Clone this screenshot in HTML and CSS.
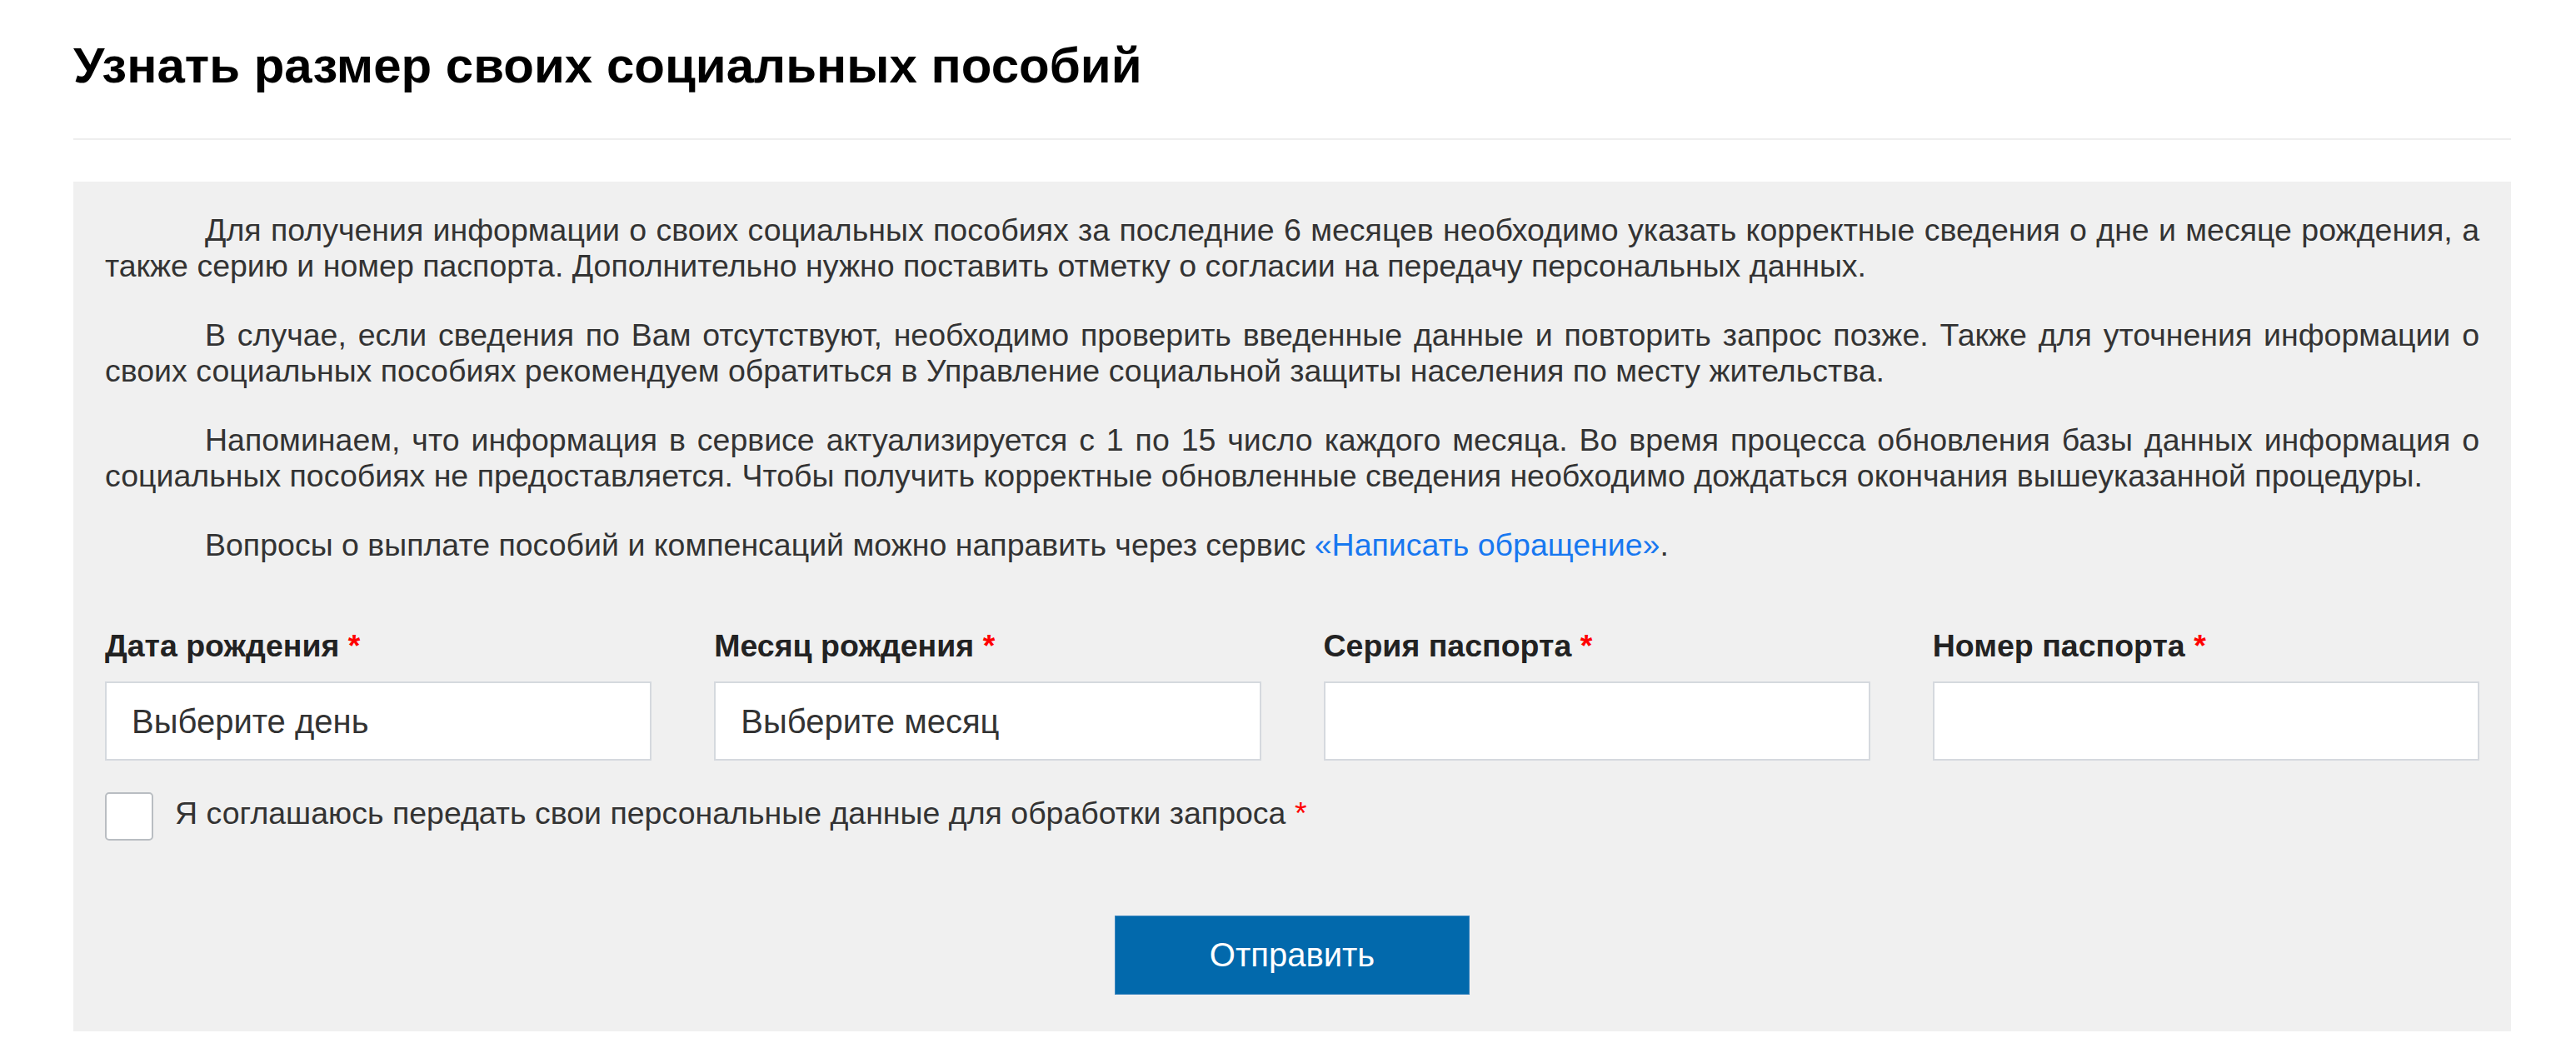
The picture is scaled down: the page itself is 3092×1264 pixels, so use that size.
FILE: index.html
```html
<!DOCTYPE html>
<html lang="ru">
<head>
    <meta charset="UTF-8">
    <meta name="viewport" content="width=device-width, initial-scale=1.0">
    <title>Узнать размер своих социальных пособий</title>
    <link rel="stylesheet" href="styles.css">
</head>
<body>

<div class="page">

    <h1 class="page-title">Узнать размер своих социальных пособий</h1>

    <div class="benefits-box">

        <!-- Info text -->
        <div class="intro">
            <p>Для получения информации о своих социальных пособиях за последние 6 месяцев необходимо указать корректные сведения о дне и месяце рождения, а также серию и номер паспорта. Дополнительно нужно поставить отметку о согласии на передачу персональных данных.</p>
            <p>В случае, если сведения по Вам отсутствуют, необходимо проверить введенные данные и повторить запрос позже. Также для уточнения информации о своих социальных пособиях рекомендуем обратиться в Управление социальной защиты населения по месту жительства.</p>
            <p>Напоминаем, что информация в сервисе актуализируется с 1 по 15 число каждого месяца. Во время процесса обновления базы данных информация о социальных пособиях не предоставляется. Чтобы получить корректные обновленные сведения необходимо дождаться окончания вышеуказанной процедуры.</p>
            <p>Вопросы о выплате пособий и компенсаций можно направить через сервис <a href="#">«Написать обращение»</a>.</p>
        </div>

        <!-- Request form -->
        <form class="benefits-form" id="benefitsForm">
            <div class="fields">
                <div class="field">
                    <label for="birthDay">Дата рождения <span class="req">*</span></label>
                    <select id="birthDay" class="control">
                        <option>Выберите день</option>
                    </select>
                </div>
                <div class="field">
                    <label for="birthMonth">Месяц рождения <span class="req">*</span></label>
                    <select id="birthMonth" class="control">
                        <option>Выберите месяц</option>
                    </select>
                </div>
                <div class="field">
                    <label for="passSeries">Серия паспорта <span class="req">*</span></label>
                    <input id="passSeries" class="control" type="text">
                </div>
                <div class="field">
                    <label for="passNumber">Номер паспорта <span class="req">*</span></label>
                    <input id="passNumber" class="control" type="text">
                </div>
            </div>

            <label class="agree">
                <input type="checkbox" name="agree">
                <span>Я соглашаюсь передать свои персональные данные для обработки запроса <span class="req">*</span></span>
            </label>

            <div class="actions">
                <button type="submit" class="submit-btn">Отправить</button>
            </div>
        </form>

    </div>
</div>

</body>
</html>
```

FILE: styles.css
```css
body {
    margin: 0;
    font-family: "Liberation Sans", Arial, sans-serif;
    color: #333;
    background-color: #fff;
}
.page {
    width: 2926px;
    margin-left: 88px;
}
.page-title {
    margin: 0;
    padding: 44px 0 53px;
    font-size: 60px;
    line-height: 69px;
    font-weight: bold;
    color: #000;
    border-bottom: 2px solid #eee;
}
.benefits-box {
    margin-top: 50px;
    background-color: #f0f0f0;
    padding: 37px 38px 44px;
}
.intro p {
    margin: 0 0 40px;
    font-size: 37.5px;
    line-height: 43px;
    text-indent: 120px;
    text-align: justify;
}
.intro p:last-child {
    margin-bottom: 0;
}
.intro a {
    color: #1878f0;
    text-decoration: none;
}
.benefits-form {
    margin-top: 78px;
}
.fields {
    display: grid;
    grid-template-columns: repeat(4, 1fr);
    column-gap: 75px;
}
.field label {
    display: block;
    margin-bottom: 21px;
    font-size: 37.5px;
    line-height: 43px;
    font-weight: bold;
    color: #222;
}
.req {
    color: #f00;
}
.control {
    display: block;
    width: 100%;
    height: 95px;
    box-sizing: border-box;
    margin: 0;
    padding: 0 30px;
    font-family: inherit;
    font-size: 40px;
    color: #333;
    background-color: #fff;
    border: 2px solid #d5d9de;
    border-radius: 0;
    appearance: none;
    -webkit-appearance: none;
    outline: none;
}
.agree {
    display: flex;
    align-items: center;
    gap: 26px;
    margin-top: 38px;
    font-size: 37.5px;
    line-height: 43px;
}
.agree span {
    margin-top: -8px;
}
.agree input {
    appearance: none;
    -webkit-appearance: none;
    flex: none;
    width: 58px;
    height: 58px;
    margin: 0;
    background-color: #fff;
    border: 2px solid #b9bdc2;
    border-radius: 5px;
}
.actions {
    display: flex;
    justify-content: center;
    margin-top: 90px;
}
.submit-btn {
    width: 426px;
    height: 95px;
    padding: 0;
    font-family: inherit;
    font-size: 40px;
    color: #fff;
    background-color: #0269ac;
    border: 1px solid #3d86bf;
    cursor: pointer;
}
.submit-btn:hover {
    background-color: #015a93;
}
```
